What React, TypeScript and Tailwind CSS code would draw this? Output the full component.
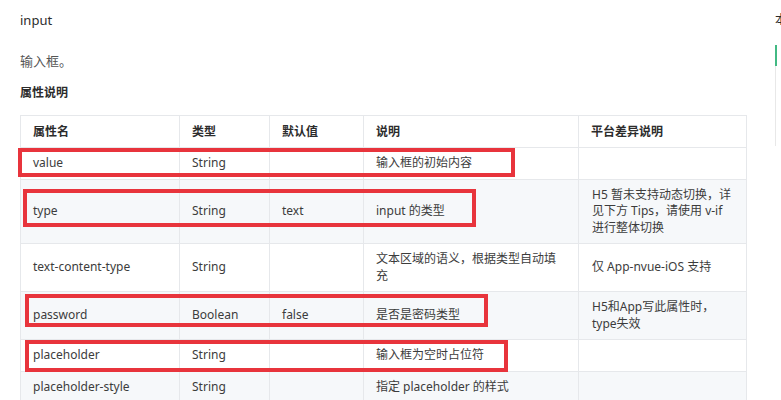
const ROWS: { name: string; type: string; def: string; desc: string; platform: string }[] = [
  { name: "value", type: "String", def: "", desc: "输入框的初始内容", platform: "" },
  { name: "type", type: "String", def: "text", desc: "input 的类型", platform: "H5 暂未支持动态切换，详见下方 Tips，请使用 v-if 进行整体切换" },
  { name: "text-content-type", type: "String", def: "", desc: "文本区域的语义，根据类型自动填充", platform: "仅 App-nvue-iOS 支持" },
  { name: "password", type: "Boolean", def: "false", desc: "是否是密码类型", platform: "H5和App写此属性时，type失效" },
  { name: "placeholder", type: "String", def: "", desc: "输入框为空时占位符", platform: "" },
  { name: "placeholder-style", type: "String", def: "", desc: "指定 placeholder 的样式", platform: "" },
];

// red annotation boxes drawn over the screenshot
const MARKS = [
  { left: 18, top: 148, width: 497, height: 29 },
  { left: 23, top: 189, width: 453, height: 38 },
  { left: 25, top: 294, width: 463, height: 33 },
  { left: 25, top: 340, width: 483, height: 32 },
];

const cell = "border border-[#e6e8eb] px-3 py-[7px] align-middle";

export default function App() {
  return (
    <div
      className="relative h-[400px] w-[781px] overflow-hidden bg-white text-[12px] leading-[16.5px] text-[#3c3c3c]"
      style={{ fontFamily: '"Noto Sans", "Noto Sans CJK SC", sans-serif' }}
    >
      <div className="flex">
        <main className="w-[746px] shrink-0 pl-5 pt-[12px]">
          <h2 className="text-[13px] font-normal text-[#2c2c2c]">input</h2>
          <p className="mt-[24px] text-[13px] text-[#555]">输入框。</p>
          <h3 className="mt-[16px] text-[12px] font-bold text-[#2c2c2c]">属性说明</h3>
          <table className="mt-[13px] w-[726px] table-fixed border-collapse">
            <colgroup>
              <col className="w-[159px]" />
              <col className="w-[90px]" />
              <col className="w-[94px]" />
              <col className="w-[215px]" />
              <col className="w-[168px]" />
            </colgroup>
            <thead>
              <tr className="bg-white text-left font-bold text-[#2c2c2c]">
                <th className={`${cell} pt-[8px]`}>属性名</th>
                <th className={`${cell} pt-[8px]`}>类型</th>
                <th className={`${cell} pt-[8px]`}>默认值</th>
                <th className={`${cell} pt-[8px]`}>说明</th>
                <th className={`${cell} pt-[8px]`}>平台差异说明</th>
              </tr>
            </thead>
            <tbody>
              {ROWS.map((r, i) => (
                <tr key={r.name} className={i % 2 === 1 ? "bg-[#f6f8fa]" : "bg-white"}>
                  <td className={cell}>{r.name}</td>
                  <td className={cell}>{r.type}</td>
                  <td className={cell}>{r.def}</td>
                  <td className={cell}>{r.desc}</td>
                  <td className={`${cell} pl-[13px]`}>{r.platform}</td>
                </tr>
              ))}
            </tbody>
          </table>
        </main>
        <aside className="ml-[29px] shrink-0 pt-[12px]">
          <div className="whitespace-nowrap text-[12px] text-[#2c2c2c]">本页导读</div>
          <div className="mt-[16px] h-[101px] border-l border-[#e8e8e8]">
            <div className="-ml-px h-[21px] w-[2px] bg-[#42b983]" />
          </div>
        </aside>
      </div>
      {MARKS.map((m, i) => (
        <div
          key={i}
          className="pointer-events-none absolute border-[4px] border-[#e8343c]"
          style={{ left: m.left, top: m.top, width: m.width, height: m.height }}
        />
      ))}
    </div>
  );
}
